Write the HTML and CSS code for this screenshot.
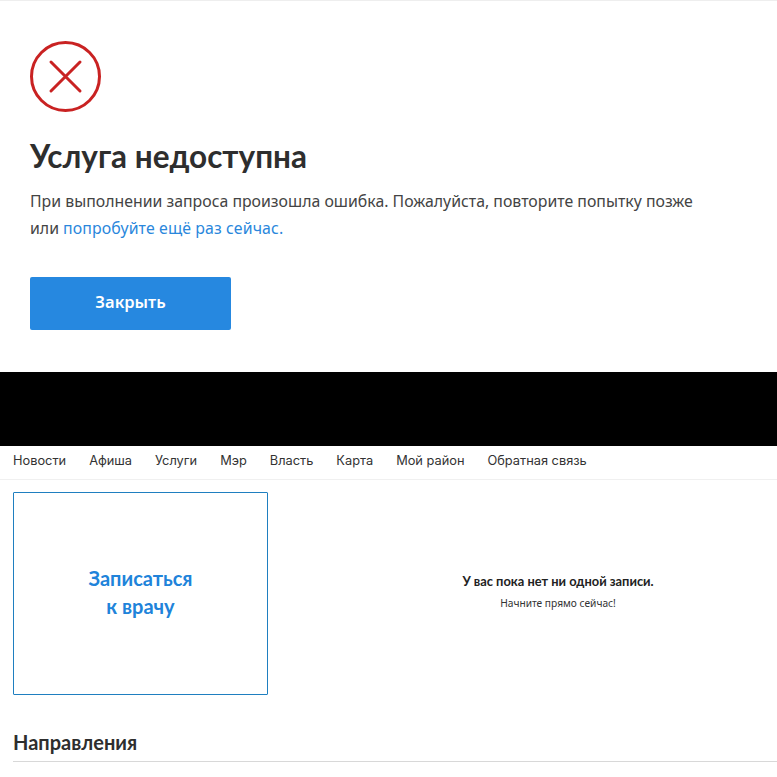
FILE: index.html
```html
<!DOCTYPE html>
<html lang="ru">
<head>
    <meta charset="UTF-8">
    <meta name="viewport" content="width=device-width, initial-scale=1.0">
    <title>Услуга недоступна</title>
    <link rel="stylesheet" href="styles.css">
</head>
<body>
    <!-- Error panel -->
    <section class="error-panel">
        <svg class="error-icon" width="71" height="71" viewBox="0 0 71 71" fill="none">
            <circle cx="35.5" cy="35.5" r="34" stroke="#c92222" stroke-width="3"/>
            <path d="M21 21L50 50M50 21L21 50" stroke="#c92222" stroke-width="3" stroke-linecap="round"/>
        </svg>
        <h1>Услуга недоступна</h1>
        <p>При выполнении запроса произошла ошибка. Пожалуйста, повторите попытку позже<br>или <a href="#">попробуйте ещё раз сейчас.</a></p>
        <button type="button">Закрыть</button>
    </section>

    <div class="black-bar"></div>

    <!-- Site navigation -->
    <nav class="site-nav">
        <a href="#">Новости</a>
        <a href="#">Афиша</a>
        <a href="#">Услуги</a>
        <a href="#">Мэр</a>
        <a href="#">Власть</a>
        <a href="#">Карта</a>
        <a href="#">Мой район</a>
        <a href="#">Обратная связь</a>
    </nav>

    <!-- Appointments -->
    <section class="appointments">
        <a class="book-card" href="#">Записаться<br>к врачу</a>
        <div class="empty-state">
            <h3>У вас пока нет ни одной записи.</h3>
            <p>Начните прямо сейчас!</p>
        </div>
    </section>

    <h2 class="section-title">Направления</h2>
</body>
</html>
```

FILE: styles.css
```css
* {
    margin: 0;
    padding: 0;
    box-sizing: border-box;
}
body {
    font-family: 'Lato', 'Open Sans', sans-serif;
    background-color: #fff;
    color: #2e2e2e;
    overflow: hidden;
}
.error-panel {
    height: 372px;
    padding: 40px 30px 0;
    border-top: 1px solid #eee;
}
.error-icon {
    display: block;
}
.error-panel h1 {
    margin-top: 24px;
    font-size: 31.5px;
    line-height: 40px;
    font-weight: 700;
}
.error-panel p {
    margin-top: 12px;
    font-family: 'Noto Sans', sans-serif;
    font-size: 15.85px;
    line-height: 27px;
    color: #444;
}
.error-panel a {
    color: #2a87dc;
    text-decoration: none;
    letter-spacing: 0.12px;
}
.error-panel button {
    display: block;
    width: 201px;
    height: 53px;
    margin-top: 35px;
    padding-bottom: 4px;
    background-color: #2688e0;
    border: none;
    border-radius: 2px;
    font-family: 'Noto Sans', sans-serif;
    font-size: 16.5px;
    font-weight: 600;
    color: #fff;
}
.black-bar {
    height: 74px;
    background-color: #000;
}
.site-nav {
    display: flex;
    gap: 23px;
    height: 34px;
    padding: 0 13px 5px;
    align-items: center;
    border-bottom: 1px solid #f0f0f0;
}
.site-nav a {
    font-family: 'Inter', sans-serif;
    font-size: 12.8px;
    color: #333;
    text-decoration: none;
}
.appointments {
    display: flex;
    padding: 12px 13px 0;
}
.book-card {
    display: flex;
    align-items: center;
    justify-content: center;
    width: 255px;
    height: 203px;
    padding-bottom: 4px;
    border: 1px solid #1f7fc0;
    border-radius: 1px;
    font-size: 20px;
    line-height: 28px;
    font-weight: 700;
    text-align: center;
    text-decoration: none;
    color: #2083da;
}
.empty-state {
    flex: 1;
    padding: 80px 0 0 84px;
    text-align: center;
}
.empty-state h3 {
    font-size: 12.85px;
    line-height: 18px;
    font-weight: 700;
    color: #222;
}
.empty-state p {
    margin-top: 6px;
    font-family: 'Noto Sans', sans-serif;
    font-size: 10.2px;
    line-height: 14px;
    color: #333;
}
.section-title {
    margin: 34px 0 0 13px;
    padding-bottom: 6px;
    border-bottom: 1px solid #d8d8d8;
    font-size: 20px;
    line-height: 26px;
    font-weight: 700;
}
```
